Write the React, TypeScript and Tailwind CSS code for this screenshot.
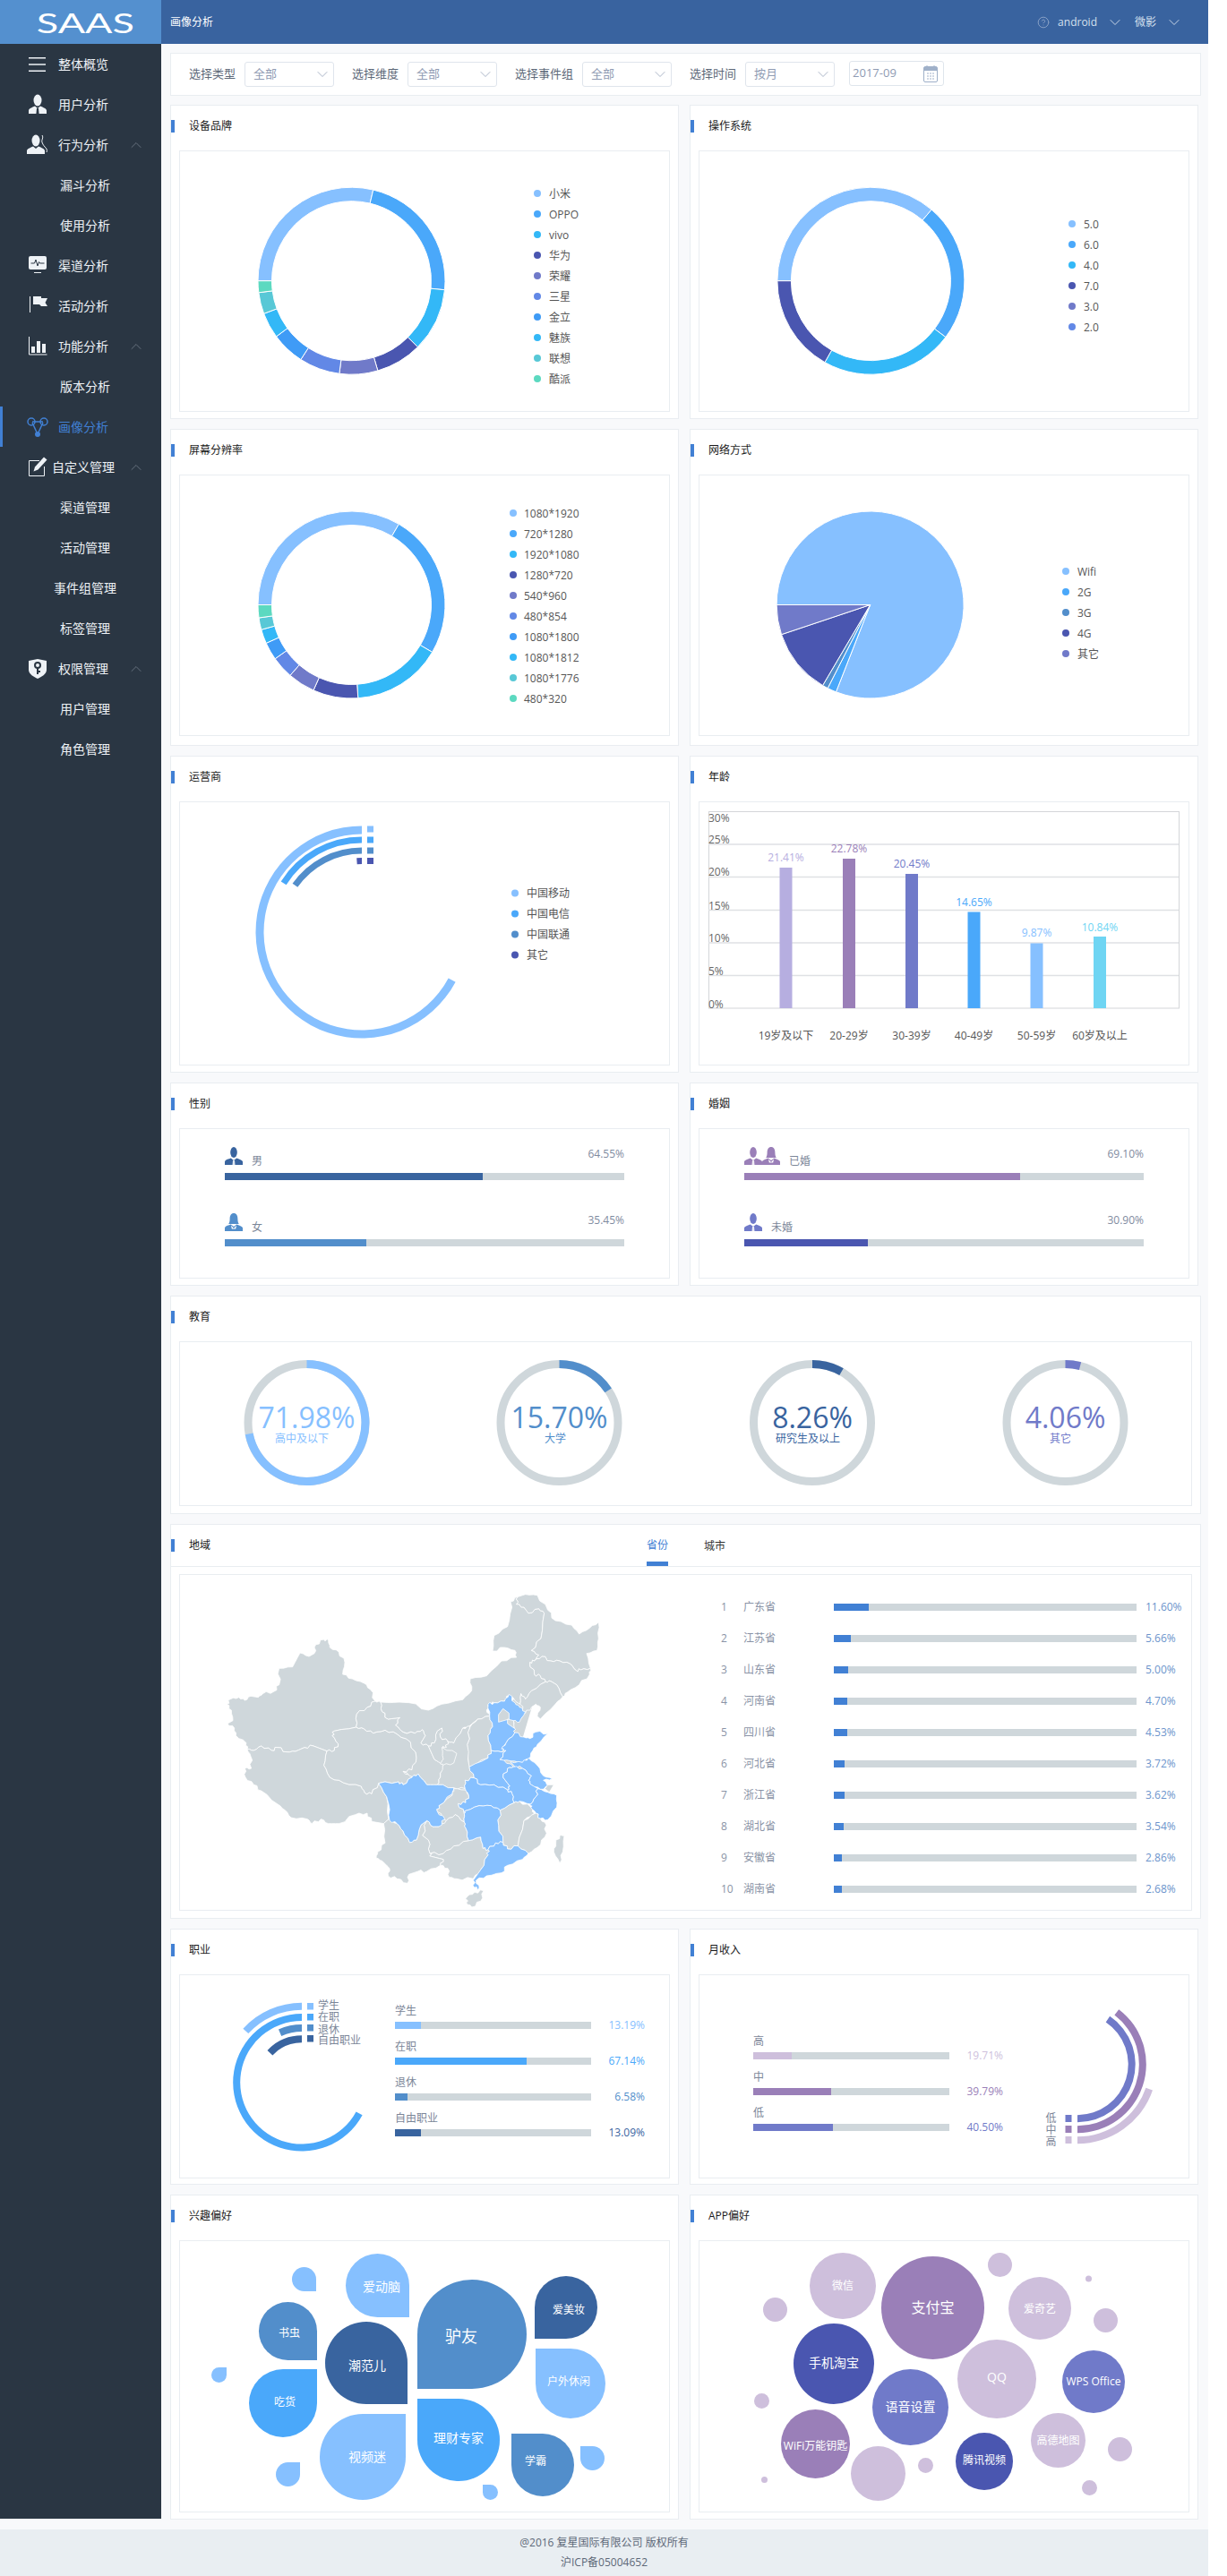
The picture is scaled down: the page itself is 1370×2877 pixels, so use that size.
import React from 'react'
import { ChevronDown, ChevronUp, CircleHelp } from 'lucide-react'

const LIGHT = '#86c0ff'
const BLUE = '#4aa8fa'
const STEEL = '#528ecb'
const NAVY = '#39649f'
const CYAN = '#33b8f7'
const INDIGO = '#4a56b0'
const SLATE = '#707ac9'
const PERI = '#6288e6'
const AZURE = '#3f9bf6'
const TEAL = '#58c8d6'
const MINT = '#5cd9c0'
const PURPLE = '#9a7fb8'
const LILAC = '#cebfdc'
const TRACK = '#cfd7db'

// a = degrees clockwise from 12 o'clock
const pt = (cx: number, cy: number, r: number, a: number) => {
  const t = (a * Math.PI) / 180
  return `${(cx + r * Math.sin(t)).toFixed(2)} ${(cy - r * Math.cos(t)).toFixed(2)}`
}

const sector = (cx: number, cy: number, ro: number, ri: number, a0: number, a1: number) => {
  const big = a1 - a0 > 180 ? 1 : 0
  if (ri === 0) return `M${cx} ${cy}L${pt(cx, cy, ro, a0)}A${ro} ${ro} 0 ${big} 1 ${pt(cx, cy, ro, a1)}Z`
  return `M${pt(cx, cy, ro, a0)}A${ro} ${ro} 0 ${big} 1 ${pt(cx, cy, ro, a1)}L${pt(cx, cy, ri, a1)}A${ri} ${ri} 0 ${big} 0 ${pt(cx, cy, ri, a0)}Z`
}

type Box = [number, number, number, number]

function Chart({ box, children }: { box: Box; children: React.ReactNode }) {
  // user space of every chart = page pixels, so numbers read straight off the screenshot
  const [x, y, w, h] = box
  return (
    <svg className="block" width={w} height={h} viewBox={`${x} ${y} ${w} ${h}`}>
      {children}
    </svg>
  )
}

function Legend({ dx, tx, y, items, step = 23 }: { dx: number; tx: number; y: number; items: [string, string][]; step?: number }) {
  return (
    <>
      {items.map(([name, color], i) => (
        <g key={name}>
          <circle cx={dx} cy={y + i * step} r={4} fill={color} />
          <text x={tx} y={y + i * step} fontSize={12} fill="#555" dominantBaseline="central">
            {name}
          </text>
        </g>
      ))}
    </>
  )
}

function Ring({ cx, cy, ro, ri, stops, colors }: { cx: number; cy: number; ro: number; ri: number; stops: number[]; colors: string[] }) {
  let prev = -90
  return (
    <>
      {stops.map((end, i) => {
        const d = sector(cx, cy, ro, ri, prev, end)
        prev = end
        return <path key={i} d={d} fill={colors[i]} stroke="#fff" strokeWidth={1} />
      })}
    </>
  )
}

function Card({ title, className, panel, children }: { title: string; className: string; panel: string; children: React.ReactNode }) {
  return (
    <section className={`border border-[#e9edf1] bg-white ${className}`}>
      <div className="flex h-[46px] items-center">
        <span className="h-[14px] w-[4px] bg-[#4180d4]" />
        <h3 className="ml-[16px] text-[12px] leading-none font-normal text-[#1a1a1a]">{title}</h3>
      </div>
      <div className={`mx-[9px] mt-[4px] border border-[#e9edf1] ${panel}`}>{children}</div>
    </section>
  )
}

function Person({ color, female }: { color: string; female?: boolean }) {
  return (
    <svg viewBox="0 0 20 20" className="h-[20px] w-[20px]">
      {female ? <path d="M10 0c3 0 4.400 2.600 4.400 6.500 0 2.600.6 4.200 1.400 5.500H4.200c.8-1.300 1.400-2.900 1.400-5.500C5.600 2.600 7 0 10 0z" fill={color} /> : <ellipse cx="10" cy="6" rx="3.800" ry="6" fill={color} />}
      <path d="M0 20v-3.400c0-1.800 3-2.800 6.800-4.200L10 15l3.200-2.600c3.800 1.400 6.800 2.400 6.800 4.200V20z" fill={color} />
      {!female && <path d="M9 15h2l.5 5h-3z" fill="#fff" opacity={0.85} />}
      {female && <path d="M7 13.500l3 3.500 3-3.500-.8 4H7.800z" fill="#fff" />}
    </svg>
  )
}

function Select({ value }: { value: string }) {
  return (
    <div className="ml-[10px] flex h-[28px] w-[100px] items-center justify-between rounded-[3px] border border-[#dfe5ec] pr-[2px] pl-[9px] text-[13px] text-[#8f9bb3]">
      <span>{value}</span>
      <ChevronDown size={20} strokeWidth={1.1} className="text-[#a3aec2]" />
    </div>
  )
}

function FilterBar() {
  return (
    <div className="flex h-[48px] w-[1151px] items-center border border-[#e9edf1] bg-white pl-[20px] text-[13px] text-[#5d6878]">
      <span>选择类型</span>
      <Select value="全部" />
      <span className="ml-[20px]">选择维度</span>
      <Select value="全部" />
      <span className="ml-[20px]">选择事件组</span>
      <Select value="全部" />
      <span className="ml-[20px]">选择时间</span>
      <Select value="按月" />
      <div className="ml-[16px] flex h-[28px] w-[106px] -translate-y-px items-center justify-between rounded-[3px] border border-[#dfe5ec] pr-[6px] pl-[3px] text-[#8f9bb3]">
        <span>2017-09</span>
        <svg viewBox="0 0 16 20" className="h-[20px] w-[16px]">
          <rect x="0.5" y="2.5" width="15" height="17" rx="1.5" fill="none" stroke="#9fb0c9" />
          <rect x="1" y="3" width="14" height="4" fill="#9fb0c9" />
          <path d="M4 1v3M12 1v3" stroke="#9fb0c9" />
          <path d="M4 10h2M7 10h2M10 10h2M4 13h2M7 13h2M10 13h2M4 16h2M7 16h2M10 16h2" stroke="#9fb0c9" />
        </svg>
      </div>
    </div>
  )
}

const icons: Record<string, React.ReactNode> = {
  menu: <path d="M2 4h19v1.5H2zM2 11.300h19v1.5H2zM2 18.600h19v1.5H2z" fill="currentColor" />,
  user: (
    <>
      <ellipse cx="12" cy="7" rx="4.500" ry="6.500" fill="currentColor" />
      <path d="M2 22v-3.500c0-2.400 3.800-3.400 7-5l3 2.400 3-2.400c3.200 1.600 7 2.600 7 5V22z" fill="currentColor" />
      <path d="M11 16h2l.6 6h-3.200z" fill="#2a3643" />
    </>
  ),
  behavior: (
    <>
      <ellipse cx="10" cy="7" rx="4.500" ry="6.500" fill="currentColor" />
      <path d="M0 22v-3.500c0-2.400 3.800-3.400 7-5l3 2.400 3-2.400c3.200 1.600 7 2.600 7 5V22z" fill="currentColor" />
      <path d="M17 1c2 3-1 5 0 8s3 5 4 6 2 3 1 5" fill="none" stroke="currentColor" />
    </>
  ),
  channel: (
    <>
      <rect x="2" y="1" width="20" height="15" rx="2" fill="currentColor" />
      <path d="M4.500 9h4l1.500-4 2 7 1.500-4.500 1 1.500h5" fill="none" stroke="#2a3643" />
      <path d="M8 19.500h8" stroke="currentColor" />
    </>
  ),
  flag: (
    <>
      <path d="M3.500 1v18" stroke="currentColor" />
      <path d="M7 1h9v2h7l-2.500 5 2.500 4h-7l-2-2H7z" fill="currentColor" />
    </>
  ),
  chart: (
    <>
      <path d="M2.500 1v20h20" fill="none" stroke="currentColor" />
      <path d="M5 12h4v7H5zM11 6h4v13h-4zM17 9h4v10h-4z" fill="currentColor" />
    </>
  ),
  network: (
    <>
      <path d="M6 6h12M6 7l6 13M18 7l-6 13" fill="none" stroke="currentColor" strokeWidth="1.5" />
      <circle cx="5" cy="6" r="4" fill="none" stroke="currentColor" strokeWidth="1.5" />
      <circle cx="19" cy="6" r="4" fill="none" stroke="currentColor" strokeWidth="1.5" />
      <circle cx="12" cy="20" r="3" fill="currentColor" />
    </>
  ),
  edit: (
    <>
      <path d="M14 4.500H2.500v17h17V11" fill="none" stroke="currentColor" />
      <path d="M19 .5l3.500 3-10 11-5 2 1.500-5z" fill="currentColor" />
    </>
  ),
  shield: (
    <>
      <path d="M2 3l10-2 10 2v10c0 5-6 8-10 10C8 21 2 18 2 13z" fill="currentColor" />
      <circle cx="12" cy="8" r="3" fill="none" stroke="#2a3643" strokeWidth="2" />
      <path d="M12 11v7M12 15h3" stroke="#2a3643" strokeWidth="2" />
    </>
  ),
}

const nav = [
  { t: '整体概览', i: 'menu' },
  { t: '用户分析', i: 'user' },
  { t: '行为分析', i: 'behavior', open: true },
  { t: '漏斗分析' },
  { t: '使用分析' },
  { t: '渠道分析', i: 'channel' },
  { t: '活动分析', i: 'flag' },
  { t: '功能分析', i: 'chart', open: true },
  { t: '版本分析' },
  { t: '画像分析', i: 'network', active: true },
  { t: '自定义管理', i: 'edit', open: true },
  { t: '渠道管理' },
  { t: '活动管理' },
  { t: '事件组管理' },
  { t: '标签管理' },
  { t: '权限管理', i: 'shield', open: true },
  { t: '用户管理' },
  { t: '角色管理' },
]

function Sidebar() {
  return (
    <aside className="h-[2764px] w-[180px] shrink-0 bg-[#2a3643] text-[14px] text-[#eef2f6]">
      {nav.map((n) =>
        n.i ? (
          <div key={n.t} className={`flex h-[45px] items-center ${n.active ? 'border-l-[3px] border-[#4180d4] pl-[27px] text-[#4180d4]' : 'pl-[30px]'}`}>
            <svg viewBox="0 0 24 24" className="h-[24px] w-[24px]">
              {icons[n.i]}
            </svg>
            <span className="w-[78px] text-center">{n.t}</span>
            {n.open && <ChevronUp size={20} strokeWidth={1.2} className="ml-[10px] text-[#66717e]" />}
          </div>
        ) : (
          <div key={n.t} className="flex h-[45px] items-center justify-center pl-[10px]">
            {n.t}
          </div>
        ),
      )}
    </aside>
  )
}

function StatRow({ label, pct, color, icon }: { label: string; pct: number; color: string; icon: React.ReactNode }) {
  return (
    <div className="mb-[37px]">
      <div className="flex h-[29px] justify-between">
        <div className="flex h-[24px] items-end gap-[10px] leading-[16px] text-[#7b8698]">
          <div className="self-start">{icon}</div>
          <span>{label}</span>
        </div>
        <span className="leading-[16px] text-[#7f8ba0]">{pct.toFixed(2)}%</span>
      </div>
      <div className="h-[8px] bg-[#cfd7db]">
        <div className="h-full" style={{ width: `${pct}%`, background: color }} />
      </div>
    </div>
  )
}

function LabelBar({ label, pct, color }: { label: string; pct: number; color: string }) {
  return (
    <div className="mb-[12px]">
      <div className="mb-[4px] leading-[16px] text-[#7b8698]">{label}</div>
      <div className="flex h-[8px] items-center justify-between">
        <div className="h-[8px] w-[219px] bg-[#cfd7db]">
          <div className="h-full" style={{ width: `${pct}%`, background: color }} />
        </div>
        <span className="leading-[16px]" style={{ color }}>
          {pct.toFixed(2)}%
        </span>
      </div>
    </div>
  )
}

const provinces: [string, number, number][] = [
  ['广东省', 11.6, 39],
  ['江苏省', 5.66, 19],
  ['山东省', 5.0, 16],
  ['河南省', 4.7, 15],
  ['四川省', 4.53, 15],
  ['河北省', 3.72, 12],
  ['浙江省', 3.62, 12],
  ['湖北省', 3.54, 11],
  ['安徽省', 2.86, 9],
  ['湖南省', 2.68, 9],
]

const grey = [
  // 新疆
  '10,385 22,368 50,362 70,372 90,358 115,362 130,350 168,342 185,320 185,265 230,260 255,213 285,225 303,215 308,185 335,168 350,172 355,195 385,210 405,245 398,285 430,300 470,315 490,335 507,375 480,395 445,418 443,462 370,475 363,490 383,518 370,540 345,542 300,525 270,530 240,543 210,545 180,530 160,540 125,525 100,540 78,535 75,515 40,490 35,465 12,450 30,440 25,405',
  // 西藏
  '78,535 100,540 125,525 160,540 180,530 210,545 240,543 270,530 300,525 345,542 335,590 355,630 400,648 460,660 472,682 495,685 518,650 545,695 552,770 535,785 495,778 480,750 440,755 385,785 350,785 325,770 295,785 280,770 225,765 205,740 180,720 125,675 100,655 72,630 70,600 92,600 90,560',
  // 青海
  '345,542 370,540 383,518 363,490 370,475 443,462 470,468 500,482 540,472 580,485 625,512 645,565 630,605 600,610 630,630 600,655 585,645 518,650 495,685 472,682 460,660 400,648 355,630 335,590',
  // 甘肃
  '443,462 445,418 480,395 507,375 525,378 530,410 550,435 590,430 575,455 600,478 640,482 665,470 675,490 660,515 685,525 705,570 725,582 735,590 725,630 715,655 680,655 650,618 635,630 600,610 630,605 645,565 625,512 580,485 540,472 500,482 470,468',
  // 内蒙古
  '525,378 620,380 685,405 730,385 800,370 830,340 825,300 880,290 930,240 980,228 975,205 940,195 900,207 905,155 950,125 965,60 960,42 985,25 980,50 1005,60 1020,80 1055,65 1073,80 1062,165 1030,205 1055,220 1040,240 1025,245 1040,285 1060,290 1078,310 1030,340 1010,368 995,350 992,385 955,355 940,375 905,380 890,380 880,405 890,425 850,435 820,460 800,465 770,515 750,510 725,495 730,465 715,475 705,515 685,525 660,515 675,490 665,470 640,482 600,478 575,455 590,430 550,435 530,410',
  // 黑龙江
  '985,25 1010,17 1050,20 1085,70 1110,105 1165,120 1190,150 1225,130 1255,110 1255,165 1250,205 1215,215 1228,265 1195,270 1180,272 1160,250 1125,240 1095,240 1065,225 1040,240 1055,220 1030,205 1062,165 1073,80 1055,65 1020,80 1005,60 980,50',
  // 吉林
  '1040,240 1065,225 1095,240 1125,240 1160,250 1180,272 1195,270 1228,265 1225,285 1190,320 1150,345 1135,360 1115,320 1095,308 1078,310 1060,290 1040,285 1025,245',
  // 辽宁
  '1078,310 1095,308 1115,320 1135,360 1110,385 1060,435 1050,425 1060,395 1045,385 1030,395 1010,415 992,385 995,350 1010,368 1030,340',
  // 山西
  '890,425 900,460 885,490 895,540 885,565 820,595 815,520 825,460 850,435',
  // 宁夏
  '725,495 750,510 745,530 730,530 735,570 725,582 705,570 685,525 705,515 715,475 730,465',
  // 陕西
  '770,515 800,465 825,460 815,520 822,595 838,632 808,640 808,668 770,665 715,655 725,630 733,590 770,582 780,550 732,530 745,530 750,510',
  // 重庆
  '770,668 808,672 820,690 810,715 785,718 805,750 805,780 775,755 745,775 715,745 720,725 765,690',
  // 江西
  '925,740 972,715 990,710 1028,730 1040,750 1005,775 985,860 950,870 935,848 920,790',
  // 福建
  '1045,750 1060,768 1080,790 1075,830 1050,865 1020,885 985,860 1005,775',
  // 广西
  '690,885 735,885 770,860 820,842 860,830 868,868 885,872 885,890 860,940 835,970 780,970 755,965 750,935 725,925 735,905 695,895',
  // 贵州
  '665,825 680,775 700,795 720,795 745,775 775,755 805,780 810,800 820,842 770,860 735,885 690,885 685,840',
  // 云南
  '552,770 580,785 600,810 622,848 645,840 660,790 680,775 665,825 685,840 690,885 695,895 735,905 725,925 680,945 650,945 620,955 615,985 580,970 550,960 555,935 530,910 510,900 515,880 540,850 535,785',
  // 海南
  '815,1030 840,1015 870,1010 860,1045 830,1065 812,1050',
  // 台湾
  '1125,825 1140,825 1135,880 1125,918 1105,880 1112,850',
]

const blue = [
  // 河北
  '885,385 905,380 940,375 955,352 975,380 990,395 1010,410 990,445 970,440 972,465 975,480 945,515 930,545 895,540 885,490 900,460 890,425',
  // 四川
  '518,650 585,645 600,655 630,630 650,618 680,655 715,655 770,665 765,685 720,725 715,745 740,770 720,795 700,795 680,775 660,790 645,840 622,848 600,810 580,785 555,775 552,720 545,695',
  // 河南
  '895,540 930,545 945,540 925,570 960,585 970,595 950,600 935,630 958,660 950,672 905,655 860,655 838,632 822,595 885,565',
  // 山东
  '975,480 1005,495 1025,500 1045,478 1085,483 1050,520 1035,540 1020,570 1000,580 960,575 925,570 945,540 930,535 945,515',
  // 江苏
  '960,578 1000,580 1020,565 1050,590 1070,625 1100,635 1070,640 1090,660 1060,670 1030,655 1020,640 1030,625 1000,600 970,590',
  // 安徽
  '970,595 1000,600 1030,625 1020,640 1030,655 1052,668 1045,695 1028,720 990,710 972,715 965,685 950,672 958,660 935,630 950,600',
  // 湖北
  '808,640 838,632 860,655 905,655 950,672 965,685 972,715 925,740 895,725 855,725 810,742 805,750 785,718 810,715 820,690 808,668',
  // 浙江
  '1052,668 1085,680 1115,690 1115,730 1085,772 1060,768 1045,750 1028,730 1028,720 1045,695',
  // 湖南
  '810,742 855,725 895,725 925,740 920,790 935,848 910,850 885,872 868,868 860,830 820,842 810,800 805,780 805,750',
  // 广东
  '910,850 935,848 950,870 985,860 1020,885 1000,905 950,925 930,950 880,960 845,975 855,1003 840,1000 835,975 860,940 885,890 885,872',
]

// shake the straight edges a bit so borders read like a map; keyed on the edge so neighbours stay in step
const rough = (points: string) => {
  const p = points.split(' ').map((s) => s.split(',').map(Number))
  return p
    .flatMap(([x, y], i) => {
      const [x2, y2] = p[(i + 1) % p.length]
      const flip = x > x2 || (x === x2 && y > y2)
      const [ax, ay, bx, by] = flip ? [x2, y2, x, y] : [x, y, x2, y2]
      const k = (((ax * 7 + ay * 13 + bx * 17 + by * 23) % 9) - 4) * 1.1
      const nx = -(by - ay) / (Math.hypot(bx - ax, by - ay) || 1)
      const ny = (bx - ax) / (Math.hypot(bx - ax, by - ay) || 1)
      const at = (t: number, o: number) => `${ax + (bx - ax) * t + nx * o},${ay + (by - ay) * t + ny * o}`
      const mids = [at(0.33, k), at(0.66, -k)]
      return [`${x},${y}`, ...(flip ? mids.reverse() : mids)]
    })
    .join(' ')
}

function ChinaMap() {
  return (
    <svg viewBox="0 0 1275 1080" className="mt-[16px] ml-[49px] h-[360px] w-[425px] shrink-0">
      <polygon points="420,520 700,500 900,440 1040,300 1060,300 1000,500 1000,700 900,900 700,900 560,700" fill={TRACK} />
      <g stroke="#fff" strokeWidth={2.4} strokeLinejoin="round">
        {grey.map((p, i) => (
          <polygon key={i} points={rough(p)} fill={TRACK} />
        ))}
        {blue.map((p, i) => (
          <polygon key={i} points={rough(p)} fill={LIGHT} />
        ))}
        <polygon points="935,400 955,415 955,435 920,445 920,420" fill={TRACK} />
        <polygon points="950,435 970,440 972,465 950,450" fill={TRACK} />
        <polygon points="1085,655 1105,655 1090,680 1075,668" fill={TRACK} />
      </g>
    </svg>
  )
}

type Corner = 'tl' | 'tr' | 'bl' | 'br'

function Drop({ x, y, s, c, color }: { x: number; y: number; s: number; c: Corner; color: string }) {
  // circle with one square corner, drawn for top-left then turned into place
  const r = s / 2
  const turn = { tl: 0, tr: 90, br: 180, bl: 270 }[c]
  return <path d={`M${-r} ${-r}H0A${r} ${r} 0 1 1 ${-r} 0Z`} fill={color} transform={`translate(${x + r} ${y + r}) rotate(${turn})`} />
}

const drops: [number, number, number, Corner, string][] = [
  [326, 2532, 27, 'br', LIGHT],
  [386, 2517, 71, 'br', LIGHT],
  [466, 2546, 122, 'bl', STEEL],
  [597, 2542, 70, 'bl', NAVY],
  [289, 2571, 65, 'br', STEEL],
  [363, 2593, 92, 'br', NAVY],
  [598, 2623, 78, 'tl', LIGHT],
  [236, 2644, 17, 'tr', LIGHT],
  [278, 2646, 76, 'tr', BLUE],
  [357, 2696, 96, 'tr', LIGHT],
  [466, 2679, 92, 'tl', BLUE],
  [571, 2718, 70, 'tl', STEEL],
  [648, 2732, 27, 'tl', LIGHT],
  [308, 2750, 27, 'tr', LIGHT],
  [539, 2775, 17, 'tl', LIGHT],
]

const dropLabels: [string, number, number, number][] = [
  ['爱动脑', 426, 2553, 14],
  ['驴友', 515, 2609, 18],
  ['爱美妆', 635, 2579, 12],
  ['书虫', 323, 2605, 12],
  ['潮范儿', 410, 2641, 14],
  ['户外休闲', 635, 2659, 12],
  ['吃货', 318, 2682, 12],
  ['视频迷', 410, 2743, 14],
  ['理财专家', 512, 2722, 14],
  ['学霸', 598, 2748, 12],
]

const bubbles: [number, number, number, string, string?, number?, number?][] = [
  [941, 2553, 37, LILAC, '微信', 12, 2552],
  [1041.5, 2577.5, 57.5, PURPLE, '支付宝', 16, 2577],
  [1116.5, 2529.5, 13.5, LILAC],
  [1161, 2578, 35, LILAC, '爱奇艺', 12, 2578],
  [1215.5, 2545, 3.5, LILAC],
  [865.5, 2579.5, 13.5, LILAC],
  [1234.5, 2591.5, 13.5, LILAC],
  [931, 2640, 45, INDIGO, '手机淘宝', 14, 2638],
  [1113, 2657, 44, LILAC, 'QQ', 14, 2654],
  [1221, 2660, 35, SLATE, 'WPS Office', 12, 2659],
  [1016.5, 2688.5, 42.5, SLATE, '语音设置', 14, 2687],
  [850.5, 2681.5, 8.5, LILAC],
  [910.5, 2729.5, 38.5, PURPLE, 'WiFi万能钥匙', 12, 2731],
  [1181.5, 2725.5, 30.5, LILAC, '高德地图', 12, 2725],
  [1250.5, 2735.5, 13.5, LILAC],
  [1099, 2749, 32, INDIGO, '腾讯视频', 12, 2747],
  [980.5, 2762.5, 30.5, LILAC],
  [1033.5, 2753.5, 8.5, LILAC],
  [853.5, 2769.5, 3.5, LILAC],
  [1216.5, 2778.5, 8.5, LILAC],
]

const ageBars: [string, string, number, number, number, string][] = [
  ['19岁及以下', '21.41%', 877.5, 969, 957, '#b6aee0'],
  ['20-29岁', '22.78%', 948, 959, 947, PURPLE],
  ['30-39岁', '20.45%', 1018, 976, 964.5, SLATE],
  ['40-49岁', '14.65%', 1087.5, 1018.5, 1007, BLUE],
  ['50-59岁', '9.87%', 1157.5, 1053.5, 1041.5, LIGHT],
  ['60岁及以上', '10.84%', 1228, 1046, 1035, '#6fd5f3'],
]

const eduRings: [number, number, string, string, number][] = [
  [342.5, 71.98, LIGHT, '高中及以下', 337],
  [624.5, 15.7, STEEL, '大学', 620],
  [907, 8.26, NAVY, '研究生及以上', 902],
  [1189.5, 4.06, SLATE, '其它', 1184],
]

function Dashboard() {
  return (
    <main className="flex flex-col gap-[11px] pt-[10px] pb-[11px] pl-[10px]">
      <div className="-mb-px">
        <FilterBar />
      </div>
      <div className="grid grid-cols-[568px_568px] gap-x-[12px] gap-y-[11px]">
        <Card title="设备品牌" className="h-[351px]" panel="h-[292px]">
          <Chart box={[201, 169, 546, 290]}>
            <Ring cx={392.5} cy={313.7} ro={104.5} ri={89} stops={[13.4, 95.5, 135, 163.7, 187.5, 212.8, 233.5, 249.5, 262.8, 270]} colors={[LIGHT, BLUE, CYAN, INDIGO, SLATE, PERI, AZURE, CYAN, TEAL, MINT]} />
            <Legend dx={600} tx={613} y={216} items={[['小米', LIGHT], ['OPPO', BLUE], ['vivo', CYAN], ['华为', INDIGO], ['荣耀', SLATE], ['三星', PERI], ['金立', AZURE], ['魅族', CYAN], ['联想', TEAL], ['酷派', MINT]]} />
          </Chart>
        </Card>
        <Card title="操作系统" className="h-[351px]" panel="h-[292px]">
          <Chart box={[781, 169, 546, 290]}>
            <Ring cx={972.4} cy={313.7} ro={104.5} ri={89} stops={[40.4, 127, 209.5, 270]} colors={[LIGHT, BLUE, CYAN, INDIGO]} />
            <Legend dx={1197} tx={1210} y={250} items={[['5.0', LIGHT], ['6.0', BLUE], ['4.0', CYAN], ['7.0', INDIGO], ['3.0', SLATE], ['2.0', PERI]]} />
          </Chart>
        </Card>

        <Card title="屏幕分辨率" className="h-[354px]" panel="h-[292px]">
          <Chart box={[201, 531, 546, 290]}>
            <Ring cx={392.5} cy={675.5} ro={104.5} ri={89} stops={[30.4, 120.4, 176, 204, 221, 234.8, 245.8, 254.6, 262, 270]} colors={[LIGHT, BLUE, CYAN, INDIGO, SLATE, PERI, AZURE, CYAN, TEAL, MINT]} />
            <Legend dx={573} tx={585} y={573} items={[['1080*1920', LIGHT], ['720*1280', BLUE], ['1920*1080', CYAN], ['1280*720', INDIGO], ['540*960', SLATE], ['480*854', PERI], ['1080*1800', AZURE], ['1080*1812', CYAN], ['1080*1776', TEAL], ['480*320', MINT]]} />
          </Chart>
        </Card>
        <Card title="网络方式" className="h-[354px]" panel="h-[292px]">
          <Chart box={[781, 531, 546, 290]}>
            <Ring cx={971.6} cy={675.5} ro={104.5} ri={0} stops={[201.4, 207, 210.5, 251.5, 270]} colors={[LIGHT, BLUE, STEEL, INDIGO, SLATE]} />
            <Legend dx={1190} tx={1203} y={638} items={[['Wifi', LIGHT], ['2G', BLUE], ['3G', STEEL], ['4G', INDIGO], ['其它', SLATE]]} />
          </Chart>
        </Card>

        <Card title="运营商" className="h-[354px]" panel="h-[295px]">
          <Chart box={[201, 896, 546, 293]}>
            <path d={sector(404, 1041, 118.5, 109.5, -242, 0)} fill={LIGHT} />
            <path d={sector(404, 1041, 106.5, 99.5, -58, 0)} fill={BLUE} />
            <path d={sector(404, 1041, 94.5, 87.5, -55, 0)} fill={STEEL} />
            <path d={sector(404, 1041, 83, 76, -4, 0)} fill={INDIGO} />
            <rect x={410} y={922.5} width={7} height={7} fill={LIGHT} />
            <rect x={410} y={934.5} width={7} height={7} fill={BLUE} />
            <rect x={410} y={946.5} width={7} height={7} fill={STEEL} />
            <rect x={410} y={958} width={7} height={7} fill={INDIGO} />
            <Legend dx={575} tx={588} y={997.5} items={[['中国移动', LIGHT], ['中国电信', BLUE], ['中国联通', STEEL], ['其它', INDIGO]]} />
          </Chart>
        </Card>
        <Card title="年龄" className="h-[354px]" panel="h-[295px]">
          <Chart box={[781, 896, 546, 293]}>
            <rect x={791.5} y={906.5} width={525} height={219.5} fill="none" stroke="#d4d6d9" />
            {[943, 979.5, 1016.5, 1053, 1089.5].map((y) => (
              <line key={y} x1={791} x2={1316} y1={y} y2={y} stroke="#dfe1e4" strokeWidth={1.5} />
            ))}
            {([['30%', 913], ['25%', 937], ['20%', 973.5], ['15%', 1011], ['10%', 1047], ['5%', 1084], ['0%', 1121]] as [string, number][]).map(([t, y]) => (
              <text key={t} x={791} y={y} fontSize={12} fill="#666" dominantBaseline="central">
                {t}
              </text>
            ))}
            {ageBars.map(([name, val, x, top, ly, color]) => (
              <g key={name}>
                <rect x={x - 7} y={top} width={14} height={1126 - top} fill={color} />
                <text x={x} y={ly} fontSize={12} fill={color} textAnchor="middle" dominantBaseline="central">
                  {val}
                </text>
                <text x={x} y={1156.5} fontSize={12} fill="#555" textAnchor="middle" dominantBaseline="central">
                  {name}
                </text>
              </g>
            ))}
          </Chart>
        </Card>

        <Card title="性别" className="h-[227px]" panel="h-[168px] px-[50px] pt-[20px] text-[12px]">
          <StatRow label="男" pct={64.55} color={NAVY} icon={<Person color={NAVY} />} />
          <StatRow label="女" pct={35.45} color={STEEL} icon={<Person color={STEEL} female />} />
        </Card>
        <Card title="婚姻" className="h-[227px]" panel="h-[168px] px-[50px] pt-[20px] text-[12px]">
          <StatRow
            label="已婚"
            pct={69.1}
            color={PURPLE}
            icon={
              <div className="flex">
                <Person color={PURPLE} />
                <Person color={PURPLE} female />
              </div>
            }
          />
          <StatRow label="未婚" pct={30.9} color={INDIGO} icon={<Person color={SLATE} />} />
        </Card>
      </div>

      <Card title="教育" className="h-[244px] w-[1151px]" panel="h-[184px]">
        <Chart box={[201, 1499, 1129, 182]}>
          {eduRings.map(([cx, pct, color, label, lx]) => (
            <g key={label}>
              <circle cx={cx} cy={1589} r={65.5} fill="none" stroke={TRACK} strokeWidth={9} />
              <path d={sector(cx, 1589, 70, 61, 0, (pct / 100) * 360)} fill={color} />
              <text x={cx} y={1582} fontSize={32} fill={color} textAnchor="middle" dominantBaseline="central">
                {pct.toFixed(2)}%
              </text>
              <text x={lx} y={1606} fontSize={12} fill={color} textAnchor="middle" dominantBaseline="central">
                {label}
              </text>
            </g>
          ))}
        </Chart>
      </Card>

      <section className="h-[441px] w-[1151px] border border-[#e9edf1] bg-white">
        <div className="flex h-[47px] items-center border-b border-[#e9edf1]">
          <span className="h-[14px] w-[4px] bg-[#4180d4]" />
          <h3 className="ml-[16px] text-[12px] leading-none font-normal text-[#1a1a1a]">地域</h3>
          <div className="ml-[487px] flex h-full gap-[40px] text-[12px]">
            <span className="flex h-[46px] w-[24px] items-center justify-center border-b-[5px] border-[#4180d4] pt-[5px] text-[#4180d4]">省份</span>
            <span className="flex h-[46px] w-[24px] items-center justify-center pt-[1px] text-[#333]">城市</span>
          </div>
        </div>
        <div className="mx-[9px] mt-[8px] flex h-[376px] border border-[#e9edf1] text-[12px]">
          <ChinaMap />
          <div className="ml-[130px] pt-[18px]">
            {provinces.map(([name, pct, fill], i) => (
              <div key={name} className="flex h-[35px] items-center">
                <span className="w-[25px] text-[#8a93a6]">{i + 1}</span>
                <span className="w-[101px] text-[#8a93a6]">{name}</span>
                <div className="h-[8px] w-[338px] bg-[#cfd7db]">
                  <div className="h-full bg-[#4180d4]" style={{ width: fill }} />
                </div>
                <span className="ml-[10px] text-[#6c94cc]">{pct.toFixed(2)}%</span>
              </div>
            ))}
          </div>
        </div>
      </section>

      <div className="grid grid-cols-[568px_568px] gap-x-[12px] gap-y-[11px]">
        <Card title="职业" className="h-[286px]" panel="flex h-[228px] text-[12px]">
          <Chart box={[201, 2206, 240, 226]}>
            <path d={sector(337, 2325.8, 89, 81, -47.5, 0)} fill={LIGHT} />
            <path d={sector(337, 2325.8, 76.8, 68.8, -241.7, 0)} fill={BLUE} />
            <path d={sector(337, 2325.8, 64.7, 56.7, -23.7, 0)} fill={STEEL} />
            <path d={sector(337, 2325.8, 52.6, 44.6, -47, 0)} fill={NAVY} />
            {([[2237, LIGHT], [2249, BLUE], [2261, STEEL], [2273, NAVY]] as [number, string][]).map(([y, c]) => (
              <rect key={c} x={343} y={y} width={7} height={7.5} fill={c} />
            ))}
            {([['学生', 2239.5], ['在职', 2252.5], ['退休', 2266], ['自由职业', 2278.5]] as [string, number][]).map(([t, y]) => (
              <text key={t} x={355} y={y} fontSize={12} fill="#7b8698" dominantBaseline="central">
                {t}
              </text>
            ))}
          </Chart>
          <div className="w-[279px] pt-[32px]">
            <LabelBar label="学生" pct={13.19} color={LIGHT} />
            <LabelBar label="在职" pct={67.14} color={BLUE} />
            <LabelBar label="退休" pct={6.58} color={STEEL} />
            <LabelBar label="自由职业" pct={13.09} color={NAVY} />
          </div>
        </Card>
        <Card title="月收入" className="h-[286px]" panel="flex h-[228px] text-[12px]">
          <div className="ml-[60px] w-[279px] pt-[66px]">
            <LabelBar label="高" pct={19.71} color={LILAC} />
            <LabelBar label="中" pct={39.79} color={PURPLE} />
            <LabelBar label="低" pct={40.5} color={SLATE} />
          </div>
          <Chart box={[1120, 2206, 207, 226]}>
            <path d={sector(1203, 2305.5, 88.8, 80.8, 109, 180)} fill={LILAC} />
            <path d={sector(1203, 2305.5, 76.8, 68.8, 37, 180)} fill={PURPLE} />
            <path d={sector(1203, 2305.5, 64.7, 56.7, 34, 180)} fill={SLATE} />
            {([[2362, SLATE], [2374, PURPLE], [2386, LILAC]] as [number, string][]).map(([y, c]) => (
              <rect key={c} x={1189.5} y={y} width={7} height={8} fill={c} />
            ))}
            {([['低', 2365.5], ['中', 2378.5], ['高', 2391]] as [string, number][]).map(([t, y]) => (
              <text key={t} x={1173.5} y={y} fontSize={12} fill="#7b8698" textAnchor="middle" dominantBaseline="central">
                {t}
              </text>
            ))}
          </Chart>
        </Card>

        <Card title="兴趣偏好" className="h-[363px]" panel="h-[304px]">
          <Chart box={[201, 2503, 546, 302]}>
            {drops.map(([x, y, s, c, color], i) => (
              <Drop key={i} x={x} y={y} s={s} c={c} color={color} />
            ))}
            {dropLabels.map(([t, x, y, fs]) => (
              <text key={t} x={x} y={y} fontSize={fs} fill="#fff" textAnchor="middle" dominantBaseline="central">
                {t}
              </text>
            ))}
          </Chart>
        </Card>
        <Card title="APP偏好" className="h-[363px]" panel="h-[304px]">
          <Chart box={[781, 2503, 546, 302]}>
            {bubbles.map(([cx, cy, r, color, t, fs, ty], i) => (
              <g key={i}>
                <circle cx={cx} cy={cy} r={r} fill={color} />
                {t && (
                  <text x={cx} y={ty} fontSize={fs} fill="#fff" textAnchor="middle" dominantBaseline="central">
                    {t}
                  </text>
                )}
              </g>
            ))}
          </Chart>
        </Card>
      </div>
    </main>
  )
}

export default function App() {
  return (
    <div className="w-[1349px] bg-[#f8f9fb] font-['Open_Sans','Noto_Sans_CJK_SC',sans-serif]">
      <header className="flex h-[49px] bg-[#39639f] text-white">
        <div className="flex w-[180px] items-center justify-center bg-[#5490cf] pl-[11px]">
          <span className="origin-center scale-x-[1.5] font-['Lato',sans-serif] text-[30px] leading-none font-normal text-white">SAAS</span>
        </div>
        <div className="flex flex-1 items-center justify-between pr-[28px] pl-[10px] text-[12px]">
          <span>画像分析</span>
          <div className="flex items-center text-[#d5e0ee]">
            <CircleHelp size={14} strokeWidth={1.6} className="text-[#8ba3c7]" />
            <span className="ml-[9px]">android</span>
            <ChevronDown size={20} strokeWidth={1.1} className="ml-[10px]" />
            <span className="ml-[12px]">微影</span>
            <ChevronDown size={20} strokeWidth={1.1} className="ml-[10px]" />
          </div>
        </div>
      </header>
      <div className="flex items-start">
        <Sidebar />
        <Dashboard />
      </div>
      <footer className="flex h-[52px] flex-col items-center justify-center bg-[#e9eef2] text-[12px] leading-[22px] text-[#5d6878]">
        <p>@2016 复星国际有限公司 版权所有</p>
        <p>沪ICP备05004652</p>
      </footer>
    </div>
  )
}
